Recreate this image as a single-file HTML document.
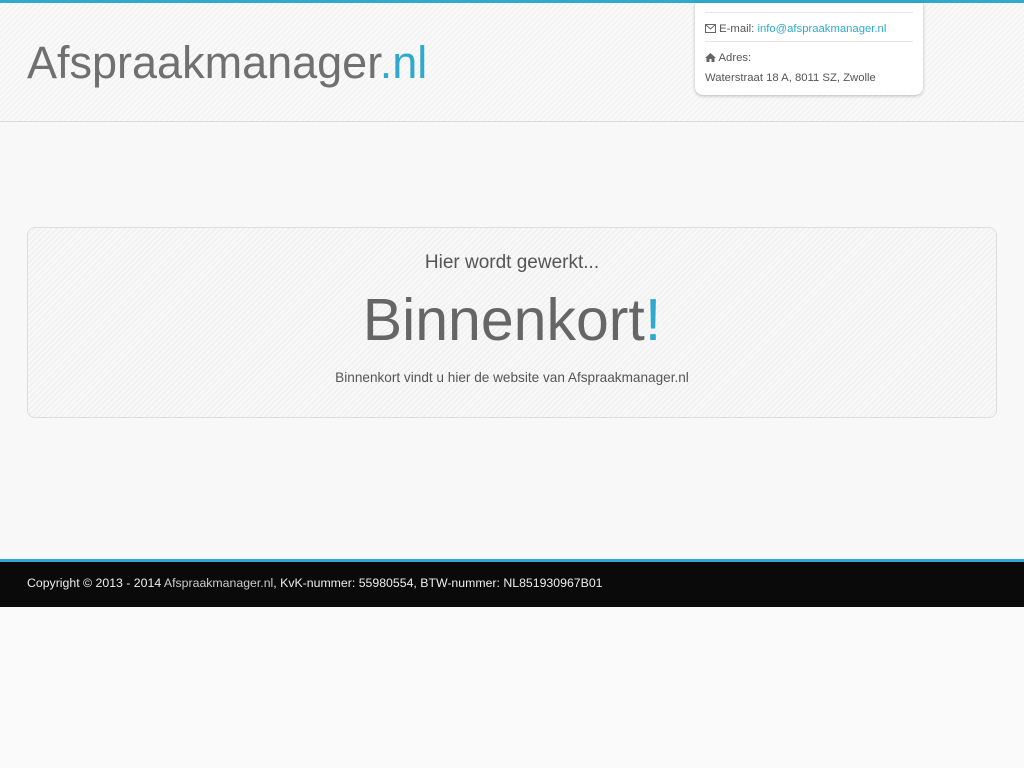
<!DOCTYPE html>
<html><head><meta charset="utf-8"><style>
*{margin:0;padding:0;box-sizing:border-box}
body{width:1024px;height:768px;overflow:hidden;font-family:"Liberation Sans","DejaVu Sans",sans-serif;background:#f8f8f8;position:relative}
.top{position:absolute;left:0;top:0;width:1024px;height:3px;background:#2fa9d0}
.header{position:absolute;left:0;top:3px;width:1024px;height:119px;background:repeating-linear-gradient(135deg,#f3f3f3 0 2px,#fafafa 2px 4px);border-bottom:1px solid #dcdcdc}
.logo{position:absolute;left:27px;top:34px;font-size:45px;color:#707070;letter-spacing:0}
.logo span{color:#2fa9d0}
.card{position:absolute;left:695px;top:3px;width:228px;height:92px;background:#fff;border-radius:0 0 8px 8px;box-shadow:0 1px 3px rgba(0,0,0,.25);font-size:11.3px;color:#555}
.card .l1{position:absolute;left:10px;right:10px;top:9px;border-top:1px solid #e5e5e5}
.card .l2{position:absolute;left:10px;right:10px;top:38px;border-top:1px solid #e5e5e5}
.card a{color:#2fa9d0;text-decoration:none}
.main{position:absolute;left:27px;top:227px;width:970px;height:191px;border:1px solid #ddd;border-radius:8px;background:repeating-linear-gradient(135deg,#f1f1f1 0 2px,#f9f9f9 2px 4px);text-align:center;color:#555}
.foot{position:absolute;left:0;top:559px;width:1024px;height:48px;background:#0a0a0a;border-top:3px solid #2fa9d0;color:#eee;font-size:12.3px}
.bottom{position:absolute;left:0;top:607px;width:1024px;height:161px;background:#fafafa}
</style></head><body>
<div class="top"></div>
<div class="header"><div class="logo">Afspraakmanager<span>.nl</span></div></div>
<div class="card">
<div class="l1"></div>
<div style="position:absolute;left:10px;top:20px"><svg width="11" height="9" viewBox="0 0 11 9" style="vertical-align:-1px"><rect x=".5" y=".5" width="10" height="8" fill="none" stroke="#666"/><path d="M.5 .5L5.5 5L10.5 .5" fill="none" stroke="#666"/></svg> E-mail: <a>info@afspraakmanager.nl</a></div>
<div class="l2"></div>
<div style="position:absolute;left:10px;top:49px"><svg width="11" height="9" viewBox="0 0 11 9" style="vertical-align:-1px"><path d="M0 5L5.5 0L11 5H9.5V9H6.5V6H4.5V9H1.5V5Z" fill="#666"/></svg> Adres:</div>
<div style="position:absolute;left:10px;top:69px">Waterstraat 18 A, 8011 SZ, Zwolle</div>
</div>
<div class="main">
<div style="position:absolute;width:100%;top:24px;font-size:19px">Hier wordt gewerkt...</div>
<div style="position:absolute;width:100%;top:58px;font-size:59px;color:#666">Binnenkort<span style="color:#2fa9d0">!</span></div>
<div style="position:absolute;width:100%;top:142px;font-size:13.6px">Binnenkort vindt u hier de website van Afspraakmanager.nl</div>
</div>
<div class="foot"><div style="position:absolute;left:27px;top:14px">Copyright © 2013 - 2014 <span style="color:#ccc">Afspraakmanager.nl</span>, KvK-nummer: 55980554, BTW-nummer: NL851930967B01</div></div>
<div class="bottom"></div>
</body></html>
